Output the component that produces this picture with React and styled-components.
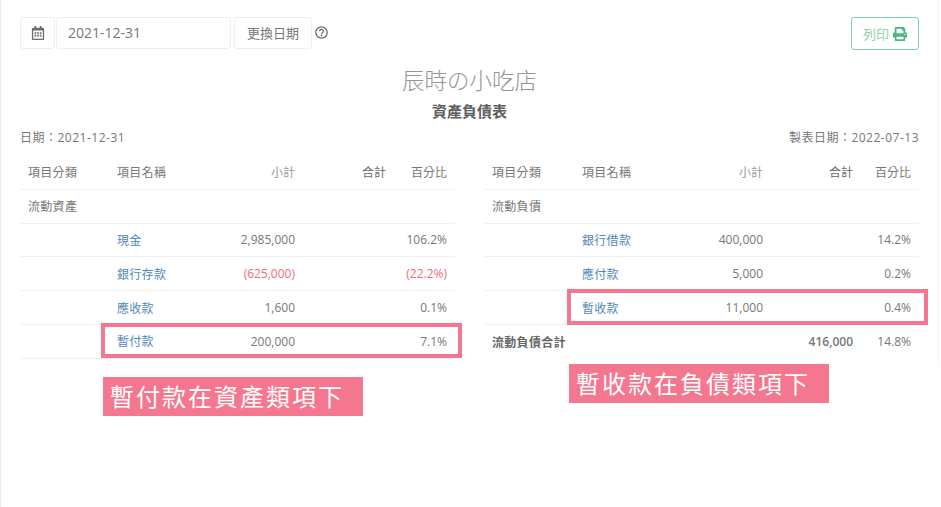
import React from "react";
import styled, { createGlobalStyle } from "styled-components";
import { FaRegCalendarAlt, FaPrint } from "react-icons/fa";
import { MdHelpOutline } from "react-icons/md";

const GlobalStyle = createGlobalStyle`
    html, body {
        margin: 0;
        background: #fff;
    }
    body {
        font-family: "Open Sans", "Noto Sans CJK TC", sans-serif;
        font-size: 12px;
        color: #777;
    }
`;

const Page = styled.div`
    box-sizing: border-box;
    width: 941px;
    height: 507px;
    padding: 17px 22px 0 19px;
    border-left: 1px solid #e6eef4;
    position: relative;
    overflow: hidden;
`;

// faint edge of the captured window, stops partway down
const WindowEdge = styled.div`
    position: absolute;
    top: 0;
    right: 2px;
    width: 1px;
    height: 364px;
    background: #f3f3f3;
`;

const Toolbar = styled.div`
    display: flex;
    align-items: flex-start;
    justify-content: space-between;
`;

const DateForm = styled.div`
    display: flex;
    align-items: flex-start;
`;

const Addon = styled.div`
    box-sizing: border-box;
    width: 35px;
    height: 32px;
    display: flex;
    align-items: center;
    justify-content: center;
    border: 1px solid #eceeef;
    border-radius: 3px;
    color: #6b6b6b;
    font-size: 14px;
`;

const DateInput = styled.div`
    box-sizing: border-box;
    width: 175px;
    height: 32px;
    margin-left: 1px;
    padding-left: 11px;
    line-height: 30px;
    border: 1px solid #eceeef;
    border-radius: 3px;
    font-size: 14px;
    color: #777;
`;

const ChangeButton = styled.div`
    box-sizing: border-box;
    width: 78px;
    height: 32px;
    margin-left: 3px;
    line-height: 30px;
    text-align: center;
    border: 1px solid #eceeef;
    border-radius: 3px;
    font-size: 13px;
    color: #777;
`;

const Help = styled.div`
    margin: 8px 0 0 2px;
    color: #666;
    font-size: 15px;
    line-height: 15px;
`;

const PrintButton = styled.div`
    box-sizing: border-box;
    width: 68px;
    height: 33px;
    display: flex;
    align-items: center;
    justify-content: center;
    gap: 4px;
    border: 1px solid #7fd2a6;
    border-radius: 3px;
    color: #8fd0ac;
    font-size: 13px;
    svg {
        color: #47b77d;
        font-size: 14px;
    }
`;

const Title = styled.div`
    margin-top: 16px;
    text-align: center;
    font-size: 22.5px;
    line-height: 30px;
    color: #969696;
    font-weight: 300;
`;

const Subtitle = styled.div`
    margin-top: 5px;
    text-align: center;
    font-size: 15px;
    line-height: 20px;
    font-weight: 700;
    color: #5e5e5e;
`;

const DateLine = styled.div`
    display: flex;
    justify-content: space-between;
    margin-top: 8px;
    line-height: 17px;
    font-size: 12px;
    letter-spacing: 0.5px;
`;

const Tables = styled.div`
    display: grid;
    grid-template-columns: 435px 435px;
    justify-content: space-between;
    margin-top: 10px;
`;

const Sheet = styled.div`
    position: relative;
`;

const Row = styled.div`
    display: grid;
    grid-template-columns: ${(p) => p.$cols};
    height: 33.8px;
    align-items: center;
    box-sizing: border-box;
    padding: 0 8px;
    border-bottom: ${(p) => (p.$noLine ? "none" : "1px solid #eef0f1")};
`;

const Cell = styled.div`
    white-space: nowrap;
    text-align: ${(p) => (p.$right ? "right" : "left")};
    letter-spacing: ${(p) => (p.$right ? "0" : "0.3px")};
    color: ${(p) => p.$color || "#777"};
    font-weight: ${(p) => p.$weight || 400};
`;

const Highlight = styled.div`
    position: absolute;
    box-sizing: border-box;
    left: ${(p) => p.$left}px;
    top: ${(p) => p.$top}px;
    width: 361px;
    height: ${(p) => p.$height}px;
    border: 4px solid #f5778f;
`;

const Callout = styled.div`
    position: absolute;
    box-sizing: border-box;
    left: ${(p) => p.$left}px;
    top: ${(p) => p.$top}px;
    width: 259.5px;
    height: 39px;
    padding-left: 7px;
    background: #f5778f;
    color: #fff;
    font-size: 24px;
    line-height: 39px;
    letter-spacing: 2px;
`;

const RED = "#ef6b77";
const LINK = "#4f86b8";

const leftCols = "89px 89px 89px 91px 1fr";
const rightCols = "90px 90px 91px 90px 1fr";

const assets = [
    { name: "現金", sub: "2,985,000", pct: "106.2%" },
    { name: "銀行存款", sub: "(625,000)", pct: "(22.2%)", red: true },
    { name: "應收款", sub: "1,600", pct: "0.1%" },
    { name: "暫付款", sub: "200,000", pct: "7.1%" },
];

const liabilities = [
    { name: "銀行借款", sub: "400,000", pct: "14.2%" },
    { name: "應付款", sub: "5,000", pct: "0.2%" },
    { name: "暫收款", sub: "11,000", pct: "0.4%" },
];

function HeaderRow({ cols }) {
    return (
        <Row $cols={cols}>
            <Cell>項目分類</Cell>
            <Cell>項目名稱</Cell>
            <Cell $right $color="#9a9a9a">
                小計
            </Cell>
            <Cell $right $color="#666">
                合計
            </Cell>
            <Cell $right>百分比</Cell>
        </Row>
    );
}

function ItemRow({ cols, item }) {
    const numColor = item.red ? RED : undefined;
    return (
        <Row $cols={cols}>
            <Cell />
            <Cell $color={LINK}>{item.name}</Cell>
            <Cell $right $color={numColor}>
                {item.sub}
            </Cell>
            <Cell $right />
            <Cell $right $color={numColor}>
                {item.pct}
            </Cell>
        </Row>
    );
}

export default function App() {
    return (
        <Page>
            <GlobalStyle />
            <WindowEdge />
            <Toolbar>
                <DateForm>
                    <Addon>
                        <FaRegCalendarAlt />
                    </Addon>
                    <DateInput>2021-12-31</DateInput>
                    <ChangeButton>更換日期</ChangeButton>
                    <Help>
                        <MdHelpOutline />
                    </Help>
                </DateForm>
                <PrintButton>
                    列印 <FaPrint />
                </PrintButton>
            </Toolbar>
            <Title>辰時の小吃店</Title>
            <Subtitle>資產負債表</Subtitle>
            <DateLine>
                <span>日期：2021-12-31</span>
                <span>製表日期：2022-07-13</span>
            </DateLine>
            <Tables>
                <Sheet>
                    <HeaderRow cols={leftCols} />
                    <Row $cols={leftCols}>
                        <Cell>流動資產</Cell>
                    </Row>
                    {assets.map((item) => (
                        <ItemRow key={item.name} cols={leftCols} item={item} />
                    ))}
                    <Highlight $left={81} $top={167} $height={35} />
                    <Callout $left={83} $top={221}>
                        暫付款在資產類項下
                    </Callout>
                </Sheet>
                <Sheet>
                    <HeaderRow cols={rightCols} />
                    <Row $cols={rightCols}>
                        <Cell>流動負債</Cell>
                    </Row>
                    {liabilities.map((item) => (
                        <ItemRow key={item.name} cols={rightCols} item={item} />
                    ))}
                    <Row $cols={rightCols} $noLine>
                        <Cell $weight={600} $color="#666">
                            流動負債合計
                        </Cell>
                        <Cell />
                        <Cell />
                        <Cell $right $weight={600}>
                            416,000
                        </Cell>
                        <Cell $right>14.8%</Cell>
                    </Row>
                    <Highlight $left={83} $top={133} $height={36} />
                    <Callout $left={85} $top={208}>
                        暫收款在負債類項下
                    </Callout>
                </Sheet>
            </Tables>
        </Page>
    );
}
